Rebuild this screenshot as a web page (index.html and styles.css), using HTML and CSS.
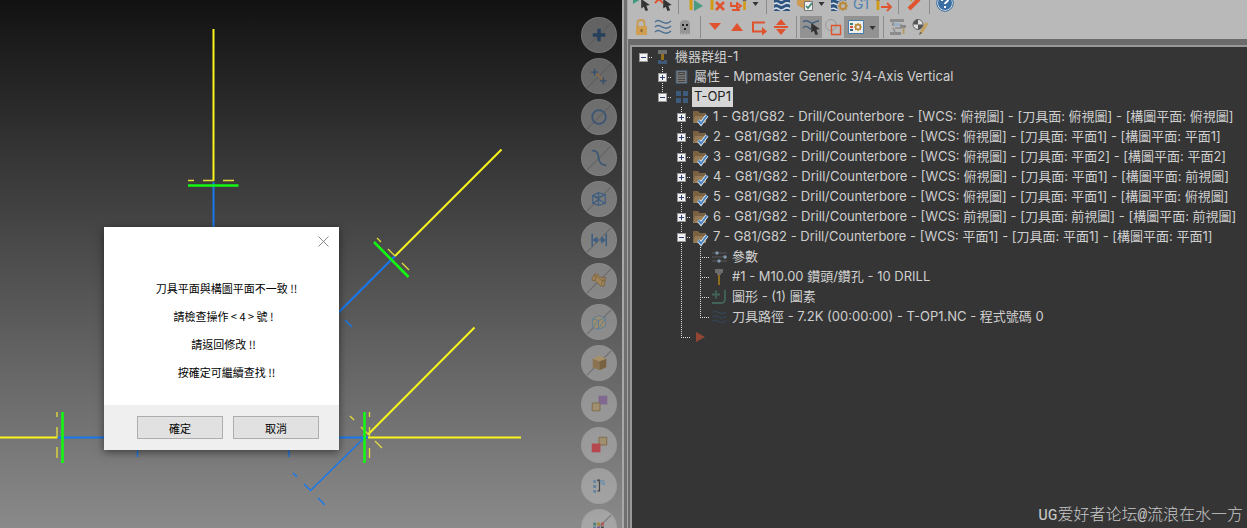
FILE: index.html
```html
<!DOCTYPE html>
<html lang="zh-Hant">
<head>
<meta charset="utf-8">
<title>Toolpath Manager</title>
<link rel="stylesheet" href="styles.css">
</head>
<body>
<svg class="defs" aria-hidden="true">
  <symbol id="cursor" viewBox="0 0 10 14"><path d="M0 0v11l3-2 2 5 3-1-2-5 4-1z" fill="#333"/></symbol>
  <symbol id="waves" viewBox="0 0 18 16"><path d="M1 3c3-3 5-1 7 0s5 3 9-1M1 8c3-3 5-1 7 0s5 3 9-1M1 13c3-3 5-1 7 0s5 3 9-1" fill="none" stroke="currentColor" stroke-width="1.4"/></symbol>
  <symbol id="bit" viewBox="0 0 8 16"><path d="M0 0h8v4H6v2H2V4H0z" fill="#666"/><path d="M2.500 6h3v10h-3z" fill="#d39a16"/></symbol>
  <symbol id="gear" viewBox="0 0 10 10"><circle cx="5" cy="5" r="3" fill="none" stroke="#b98a3c" stroke-width="2"/><path d="M5 0v2M5 8v2M0 5h2M8 5h2M1.500 1.500l1.400 1.400M7.100 7.100l1.400 1.400M8.500 1.500L7.100 2.900M2.900 7.100L1.500 8.500" stroke="#b98a3c" stroke-width="1.500"/></symbol>
  <symbol id="folder" viewBox="0 0 19 20"><path d="M2 4h5l2 2h6v10H2z" fill="#796142"/><path d="M2 16l2-7h11v7z" fill="#947a55"/><path d="M7.500 13.500l2.500 3 6-8" fill="none" stroke="#e4eaf0" stroke-width="3.600"/><path d="M7.500 13.500l2.500 3 6-8" fill="none" stroke="#4a84c0" stroke-width="2"/></symbol>
  <symbol id="slash" viewBox="0 0 35 35"><path d="M5 30L30 5" stroke="#555" stroke-opacity=".55" stroke-width="1.200"/></symbol>
</svg>
<main class="app">
  <section class="viewport" aria-label="Graphics view">
    <svg class="drawing" width="622" height="528" viewBox="0 0 622 528" fill="none">
      <g stroke="#1878ee" stroke-width="2">
        <path d="M213.500 182v50M58 437.500h50M335 316l60-60M335 437.500h33" />
        <path d="M345 320l7 7M364 438l-53 52M293 473l4 4M304 484l7 7M318 498l7 7M137.500 448v9M289 448v9" stroke-width="1.400"/>
      </g>
      <g stroke="#f8f51c" stroke-width="2">
        <path d="M213.500 29v152M0 437.500h57M395 256l106.500-106.500M368 434.500L474.500 327.500M368 437.500h153"/>
        <path d="M188 180.500h6M203 180.500h11M223 180.500h11M57 412v5M57 427v11M57 447v11M369.500 412v5M369.500 427v9M369.500 448v10M377 238l4 4M388 249l7 7M402 263l7 7M350 416l4 4M361 427l7 7M375 441l7 7" stroke="#e4dd38" stroke-width="1.300"/>
      </g>
      <path d="M188 185.500h50.500M62.500 412v51M374 242l34.500 35M364.500 412v51" stroke="#12f812" stroke-width="2.600"/>
    </svg>

    <nav class="quick" aria-label="Quick masks">
      <button class="mask" aria-label="Points"><svg viewBox="0 0 35 35"><use href="#slash"/><path d="M17.500 11v13M11 17.500h13" stroke="#263f5c" stroke-width="3.500"/></svg></button>
      <button class="mask" aria-label="Lines"><svg viewBox="0 0 35 35"><use href="#slash"/><path d="M14 14l8 8" stroke="#8c6b46" stroke-width="1.500"/><path d="M13 10v7M9.500 13.500h7M22 19v7M18.500 22.500h7" stroke="#344f6d" stroke-width="1.500"/></svg></button>
      <button class="mask" aria-label="Arcs"><svg viewBox="0 0 35 35"><use href="#slash"/><circle cx="17.500" cy="17.500" r="7" fill="none" stroke="#3a5673" stroke-width="1.800"/></svg></button>
      <button class="mask" aria-label="Splines"><svg viewBox="0 0 35 35"><use href="#slash"/><path d="M10.500 10c5 0 6 2 6.500 7s3 8 8 8" fill="none" stroke="#3a5673" stroke-width="1.800"/></svg></button>
      <button class="mask" aria-label="Wireframe"><svg viewBox="0 0 35 35"><use href="#slash"/><path d="M11 14l6-3 7 2v9l-7 2-6-2zM11 14l6 2 7-3M17 11v13M11 22l6-4 7 4M11 14l13 8" fill="none" stroke="#3f5f80" stroke-width="1.200"/></svg></button>
      <button class="mask" aria-label="Dimensions"><svg viewBox="0 0 35 35"><use href="#slash"/><path d="M10.500 11v13M25 11v13" stroke="#3f5f80" stroke-width="1.600"/><path d="M13 17.500h10M15.500 14.500l-4 3 4 3zM20 14.500l4 3-4 3z" fill="#3f5f80" stroke="#3f5f80"/></svg></button>
      <button class="mask" aria-label="Surfaces"><svg viewBox="0 0 35 35"><use href="#slash"/><path d="M10.500 14l3-4c5 1 4 5 11 4l-2 9c-7 0-6-7-12-6z" fill="#a1845c" stroke="#7d6542"/><path d="M12 12c6 0 5 6 12 5M13 17l2-5M20 21l2-6" fill="none" stroke="#7d6542"/></svg></button>
      <button class="mask" aria-label="Solid bodies"><svg viewBox="0 0 35 35"><use href="#slash"/><path d="M11 14l6-3 7 2v9l-7 3-6-2z" fill="#9d8e70" stroke="#5b7d99"/><path d="M11 14l6 2 7-3M17 16v9M12 22l4-5M18 23l5-8" fill="none" stroke="#5b7d99"/></svg></button>
      <button class="mask" aria-label="Solid faces"><svg viewBox="0 0 35 35"><use href="#slash"/><path d="M11 13l7-3 7 3-7 3z" fill="#a89068"/><path d="M11 13l7 3v9l-7-3z" fill="#8c7450"/><path d="M18 16l7-3v9l-7 3z" fill="#78623f"/></svg></button>
      <button class="mask" aria-label="Groups"><svg viewBox="0 0 35 35"><path d="M17 9h9v9h-9z" fill="#806891"/><path d="M10.500 16.500h8v8h-8z" fill="#a19070" stroke="#7f6b4b"/></svg></button>
      <button class="mask" aria-label="Results"><svg viewBox="0 0 35 35"><path d="M17.500 9.500h8v8h-8z" fill="#a19070" stroke="#7f6b4b"/><path d="M10 16h9v9h-9z" fill="#b4484e"/></svg></button>
      <button class="mask" aria-label="Levels"><svg viewBox="0 0 35 35"><path d="M11.500 11.500h3v3h-3zM11.500 16.500h3v3h-3zM11.500 21.500h3v3h-3z" fill="#6484a0"/><path d="M15.500 11.500H18v11h-2M16 12h3" fill="none" stroke="#444" stroke-width="1.200"/><path d="M19 12h3l1 4-3-1z" fill="none" stroke="#6f90a8" stroke-width="1.400"/></svg></button>
      <button class="mask" aria-label="Colors"><svg viewBox="0 0 35 35"><use href="#slash"/><path d="M11.500 13h3v3h-3z" fill="#4e7f73"/><path d="M15.500 13h3v3h-3z" fill="#a58a3c"/><path d="M19.500 13h3v3h-3z" fill="#ad554e"/><path d="M11.500 17h3v3h-3z" fill="#557ba0"/><path d="M15.500 17h3v3h-3z" fill="#765e84"/><path d="M19.500 17h3v3h-3z" fill="#444"/></svg></button>
    </nav>

    <div class="dialog" role="dialog" aria-label="訊息">
      <div class="message">
        <button class="close" aria-label="關閉"><svg width="11" height="11" viewBox="0 0 11 11"><path d="M.5.5l10 10M10.500.5l-10 10" stroke="#888"/></svg></button>
        <p class="shift">刀具平面與構圖平面不一致 !!</p>
        <p>請檢查操作 &lt; 4 &gt; 號 !</p>
        <p>請返回修改 !!</p>
        <p class="shift">按確定可繼續查找 !!</p>
      </div>
      <div class="actions"><button>確定</button><button>取消</button></div>
    </div>
  </section>

  <section class="manager">
    <div class="toolbar">
      <div class="tools top">
        <button aria-label="Select all"><svg viewBox="0 0 22 22"><path d="M3 2l8 5-8 5z" fill="#3f9a80"/><use href="#cursor" x="11" y="7" width="9" height="12"/></svg></button>
        <button aria-label="Select dirty"><svg viewBox="0 0 22 22"><path d="M3 3l8 8M11 3l-8 8" stroke="#de5434" stroke-width="2"/><use href="#cursor" x="11" y="7" width="9" height="12"/></svg></button>
        <span class="sep"></span>
        <button aria-label="Regenerate"><svg viewBox="0 0 22 22"><use href="#bit" x="4" y="2" width="8" height="16"/><path d="M11 8l9 6-9 5z" fill="#4b9a82"/></svg></button>
        <button aria-label="Regenerate dirty"><svg viewBox="0 0 22 22"><use href="#bit" x="3" y="2" width="8" height="16"/><path d="M11 10l8 8M19 10l-8 8" stroke="#e0532f" stroke-width="2.500"/></svg></button>
        <button aria-label="Replace tool"><svg viewBox="0 0 22 22"><use href="#bit" x="14" y="3" width="7" height="16"/><path d="M4 10v4h7M5 18h8M10 10v8M10 11l4 3-4 3" fill="none" stroke="#e0532f" stroke-width="1.800"/></svg></button>
        <button class="drop" aria-label="More"><svg viewBox="0 0 12 22"><path d="M3 10h6l-3 4z" fill="#333"/></svg></button>
        <span class="sep"></span>
        <button aria-label="Backplot"><svg viewBox="0 0 22 22"><path d="M3 2h16v17H3z" fill="#2e5580"/><path d="M3 7c4-3 5 2 8 1s4-4 8-1M3 12c4-3 5 2 8 1s4-4 8-1M3 17c4-3 5 2 8 1s4-4 8-1" fill="none" stroke="#d9dfe5" stroke-width="1.600"/></svg></button>
        <button aria-label="Verify"><svg viewBox="0 0 22 22"><path d="M4 5l6-3 7 3v9l-6 3-7-4z" fill="#cf9a52"/><path d="M11.500 9.500h8v9h-8z" fill="#eee" stroke="#777"/><path d="M13 14l2 2 4-5" fill="none" stroke="#398270" stroke-width="1.600"/></svg></button>
        <button class="drop" aria-label="More"><svg viewBox="0 0 12 22"><path d="M3 10h6l-3 4z" fill="#333"/></svg></button>
        <button aria-label="Simulator options"><svg viewBox="0 0 22 22"><path d="M3 2h15v17H3z" fill="#2e5580"/><path d="M3 7c4-3 5 2 8 1s4-4 8-1M3 12c4-3 5 2 8 1s4-4 8-1M3 17c4-3 5 2 8 1" fill="none" stroke="#d9dfe5" stroke-width="1.500"/><circle cx="15" cy="14" r="6" fill="#b9b9b9"/><use href="#gear" x="10" y="9" width="10" height="10"/></svg></button>
        <button class="g1" aria-label="Post">G1</button>
        <button aria-label="High feed"><svg viewBox="0 0 22 22"><use href="#bit" x="2" y="3" width="8" height="15"/><path d="M9 15h9M15 11l4 4-4 4" fill="none" stroke="#df5431" stroke-width="1.800"/></svg></button>
        <span class="sep"></span>
        <button aria-label="Delete"><svg viewBox="0 0 22 22"><path d="M16 7L6 17" stroke="#df5431" stroke-width="4"/><path d="M4 4l5 5" stroke="#c99a3c" stroke-width="2"/></svg></button>
        <span class="sep"></span>
        <button aria-label="Help"><svg viewBox="0 0 22 22"><circle cx="11" cy="11" r="7.500" fill="#396fa5" stroke="#e5e9ed"/><circle cx="11" cy="11" r="8.300" fill="none" stroke="#396fa5"/><path d="M8 9c0-4 6-4 6-1 0 2-3 2-3 4M11 14v2" fill="none" stroke="#fff" stroke-width="2"/></svg></button>
      </div>
      <div class="tools">
        <button aria-label="Lock"><svg viewBox="0 0 22 22"><path d="M7.500 11V7q0-3 3.500-3t3.500 3v4" fill="none" stroke="#c89a4e" stroke-width="1.800"/><rect x="6" y="10" width="11" height="9" rx="1" fill="#cf9e51"/><path d="M11.500 13v3" stroke="#8b6932" stroke-width="2"/></svg></button>
        <button class="blue" aria-label="Toggle toolpath"><svg viewBox="0 0 22 22"><use href="#waves" x="2" y="3" width="18" height="16"/></svg></button>
        <button aria-label="Ghost"><svg viewBox="0 0 22 22"><path d="M6 19V8q0-4 5-4t5 4v11l-2-2-1.500 2-1.500-2-1.500 2-1.500-2z" fill="#969696"/><path d="M8 8h2v2H8zM12 8h2v2h-2zM10 12h2v2h-2z" fill="#222"/></svg></button>
        <span class="sep"></span>
        <button aria-label="Move down"><svg viewBox="0 0 22 22"><path d="M5 7h12l-6 7z" fill="#e0532f"/></svg></button>
        <button aria-label="Move up"><svg viewBox="0 0 22 22"><path d="M5 15h12l-6-8z" fill="#e0532f"/></svg></button>
        <button aria-label="Insert arrow"><svg viewBox="0 0 22 22"><path d="M17 6.500H5v9h10" fill="none" stroke="#e0532f" stroke-width="2"/><path d="M14 11l5 4.500-5 4z" fill="#e0532f"/></svg></button>
        <button aria-label="Scroll to arrow"><svg viewBox="0 0 22 22"><path d="M4 11h14" stroke="#e0532f" stroke-width="2"/><path d="M6 9h10l-5-6zM6 13h10l-5 6z" fill="#e0532f"/></svg></button>
        <span class="sep"></span>
        <button class="on" aria-label="Display selected" aria-pressed="true"><svg viewBox="0 0 22 22"><path d="M3 6c4-4 7 2 10 1s3-2 6-2M3 12c3-4 5 0 8 1" fill="none" stroke="#42617f" stroke-width="1.400"/><use href="#cursor" x="11" y="7" width="9" height="12"/></svg></button>
        <button aria-label="Geometry only"><svg viewBox="0 0 22 22"><circle cx="9" cy="9" r="5.500" fill="none" stroke="#989898"/><path d="M9.500 9.500h9v9h-9z" fill="none" stroke="#e0532f" stroke-width="1.400"/></svg></button>
        <button class="on" aria-label="Display options" aria-pressed="true"><svg viewBox="0 0 22 22"><path d="M4.500 4.500h15v13h-15z" fill="#eee" stroke="#477eac"/><path d="M6 7h3v2H6z" fill="#39816f"/><path d="M6 10h3v2H6z" fill="#d45032"/><path d="M6 13h3v2H6z" fill="#39678f"/><use href="#gear" x="10" y="7" width="8" height="8"/></svg></button>
        <button class="drop on" aria-label="More"><svg viewBox="0 0 12 22"><path d="M3 10h6l-3 4z" fill="#333"/></svg></button>
        <span class="sep"></span>
        <button aria-label="Machine simulation"><svg viewBox="0 0 22 22"><path d="M3 3h14v3H3zM3 16h11v3H3z" fill="#8c8c8c"/><path d="M6 6v3M6 12l2 4M5 9h9v3H8" fill="none" stroke="#8c8c8c" stroke-width="1.500"/><path d="M7 7h6v3H7z" fill="#9ab0c5"/><path d="M14 9h5v3h-5z" fill="#888"/><path d="M16.500 12v6" stroke="#b39b6b" stroke-width="2"/></svg></button>
        <button aria-label="Edit origin"><svg viewBox="0 0 22 22"><circle cx="9" cy="8.500" r="5" fill="#ddd" stroke="#666"/><path d="M9 8.500v-5a5 5 0 0 0-5 5zM9 8.500v5a5 5 0 0 0 5-5z" fill="#555"/><path d="M18 7l-6 10" stroke="#c5a35f" stroke-width="3"/><path d="M11 16l-1 3 3-2z" fill="#555"/></svg></button>
      </div>
    </div>

    <div class="frame">
      <div class="tree" role="tree">
        <div class="row" role="treeitem"><span class="cell h"><button class="box" aria-label="收合"></button></span><span class="icon"><svg viewBox="0 0 19 20"><path d="M5 3h9v4H5z" fill="#707070"/><path d="M8 7h3v6H8z" fill="#94701c"/><path d="M5 13h3v1h3v-1h3v4H5z" fill="#3e5a78"/></svg></span><span class="label">機器群组-1</span></div>
        <div class="row" role="treeitem"><span class="cell"></span><span class="cell v h"><button class="box plus" aria-label="展開"></button></span><span class="icon"><svg viewBox="0 0 19 20"><path d="M4 3.500h11v13H4z" fill="#777" stroke="#3e5870"/><path d="M6.500 5.500h6v2h-6zM6 10h7M6 12.500h7M6 14.500h7" fill="none" stroke="#444"/></svg></span><span class="label">屬性 - Mpmaster Generic 3/4-Axis Vertical</span></div>
        <div class="row" role="treeitem"><span class="cell"></span><span class="cell v half h"><button class="box" aria-label="收合"></button></span><span class="icon"><svg viewBox="0 0 19 20"><path d="M4 4h5v5H4zM11 4h5v5h-5zM4 11h5v5H4zM11 11h5v5h-5z" fill="#3d5c7d"/></svg></span><span class="label selected">T-OP1</span></div>
        <div class="row" role="treeitem"><span class="cell"></span><span class="cell"></span><span class="cell v h"><button class="box plus" aria-label="展開"></button></span><span class="icon"><svg><use href="#folder"/></svg></span><span class="label">1 - G81/G82 - Drill/Counterbore - [WCS: 俯視圖] - [刀具面: 俯視圖] - [構圖平面: 俯視圖]</span></div>
        <div class="row" role="treeitem"><span class="cell"></span><span class="cell"></span><span class="cell v h"><button class="box plus" aria-label="展開"></button></span><span class="icon"><svg><use href="#folder"/></svg></span><span class="label">2 - G81/G82 - Drill/Counterbore - [WCS: 俯視圖] - [刀具面: 平面1] - [構圖平面: 平面1]</span></div>
        <div class="row" role="treeitem"><span class="cell"></span><span class="cell"></span><span class="cell v h"><button class="box plus" aria-label="展開"></button></span><span class="icon"><svg><use href="#folder"/></svg></span><span class="label">3 - G81/G82 - Drill/Counterbore - [WCS: 俯視圖] - [刀具面: 平面2] - [構圖平面: 平面2]</span></div>
        <div class="row" role="treeitem"><span class="cell"></span><span class="cell"></span><span class="cell v h"><button class="box plus" aria-label="展開"></button></span><span class="icon"><svg><use href="#folder"/></svg></span><span class="label">4 - G81/G82 - Drill/Counterbore - [WCS: 俯視圖] - [刀具面: 平面1] - [構圖平面: 前視圖]</span></div>
        <div class="row" role="treeitem"><span class="cell"></span><span class="cell"></span><span class="cell v h"><button class="box plus" aria-label="展開"></button></span><span class="icon"><svg><use href="#folder"/></svg></span><span class="label">5 - G81/G82 - Drill/Counterbore - [WCS: 俯視圖] - [刀具面: 平面1] - [構圖平面: 俯視圖]</span></div>
        <div class="row" role="treeitem"><span class="cell"></span><span class="cell"></span><span class="cell v h"><button class="box plus" aria-label="展開"></button></span><span class="icon"><svg><use href="#folder"/></svg></span><span class="label">6 - G81/G82 - Drill/Counterbore - [WCS: 前視圖] - [刀具面: 前視圖] - [構圖平面: 前視圖]</span></div>
        <div class="row" role="treeitem"><span class="cell"></span><span class="cell"></span><span class="cell v h"><button class="box" aria-label="收合"></button></span><span class="icon"><svg><use href="#folder"/></svg></span><span class="label">7 - G81/G82 - Drill/Counterbore - [WCS: 平面1] - [刀具面: 平面1] - [構圖平面: 平面1]</span></div>
        <div class="row" role="treeitem"><span class="cell"></span><span class="cell"></span><span class="cell v"></span><span class="cell v h"></span><span class="icon"><svg viewBox="0 0 19 20"><path d="M2 6h15M2 10h15M2 14h15" stroke="#55595c"/><circle cx="7" cy="6" r="1.700" fill="#8097ad"/><circle cx="15" cy="10" r="1.700" fill="#8097ad"/><circle cx="9" cy="14" r="1.700" fill="#8097ad"/></svg></span><span class="label">參數</span></div>
        <div class="row" role="treeitem"><span class="cell"></span><span class="cell"></span><span class="cell v"></span><span class="cell v h"></span><span class="icon"><svg viewBox="0 0 19 20"><path d="M5 2h8v4h-2v2H7V6H5z" fill="#6c6c6c"/><path d="M8 8h2v10H8z" fill="#8d6d1c"/></svg></span><span class="label">#1 - M10.00 鑽頭/鑽孔 - 10 DRILL</span></div>
        <div class="row" role="treeitem"><span class="cell"></span><span class="cell"></span><span class="cell v"></span><span class="cell v h"></span><span class="icon"><svg viewBox="0 0 19 20"><path d="M2 7.500h8M6 3.500v8M15 3v9q0 4-4 4H2" fill="none" stroke="#416457" stroke-width="1.800"/></svg></span><span class="label">圖形 - (1) 圖素</span></div>
        <div class="row" role="treeitem"><span class="cell"></span><span class="cell"></span><span class="cell v"></span><span class="cell v half h"></span><span class="icon dim"><svg viewBox="0 0 19 20"><use href="#waves" x="1" y="3" width="17" height="14"/></svg></span><span class="label">刀具路徑 - 7.2K (00:00:00) - T-OP1.NC - 程式號碼 0</span></div>
        <div class="row" role="treeitem" aria-label="插入箭頭"><span class="cell"></span><span class="cell"></span><span class="cell v half h"></span><span class="icon"><svg viewBox="0 0 19 20"><path d="M5 5l9 5-9 5z" fill="#934633"/></svg></span></div>
      </div>
    </div>
    <p class="watermark" lang="zh-Hans">UG爱好者论坛@流浪在水一方</p>
  </section>
</main>
</body>
</html>
```

FILE: styles.css
```css
* { box-sizing: border-box; }
body { margin: 0; font-family: Inter, "Noto Sans CJK TC", sans-serif; font-size: 13px; }
button { margin: 0; padding: 0; border: 0; background: none; font: inherit; color: inherit; }
.defs { position: absolute; width: 0; height: 0; }

.app { display: grid; grid-template-columns: 622fr 625fr; height: 100vh; overflow: hidden; }

/* Graphics view */
.viewport { position: relative; min-width: 0; overflow: hidden; background: linear-gradient(#121212, #8a8a8a); }
.drawing { position: absolute; left: 0; top: 0; }

.quick { position: absolute; top: 17px; right: 5px; display: flex; flex-direction: column; gap: 5px; }
.mask { width: 36px; height: 36px; border-radius: 50%; background: rgba(205, 205, 205, .42); border: 1px solid rgba(150, 150, 150, .3); }
.mask svg { display: block; width: 34px; height: 34px; }

.dialog {
  position: absolute; left: 104px; top: 227px; width: 235px;
  background: #fff; box-shadow: 0 2px 8px rgba(0, 0, 0, .5);
  color: #000; font-family: "Noto Sans CJK TC", sans-serif; font-size: 11px; line-height: 28px;
}
.message { position: relative; padding: 47px 0 19px 4px; text-align: center; }
.message p { margin: 0; }
.message .shift { padding-left: 6px; }
.close { position: absolute; top: 8px; right: 9px; width: 12px; height: 12px; }
.close svg { display: block; }
.actions { display: flex; justify-content: flex-end; gap: 10px; padding: 11px 20px; background: #efefef; }
.actions button { width: 86px; height: 23px; border: 1px solid #adadad; background: #e1e1e1; line-height: 18px; }

/* Manager panel */
.manager {
  position: relative; display: flex; flex-direction: column; min-width: 0; padding-left: 6px;
  background: linear-gradient(90deg, #a8a8a8 2px, #707070 2px 5px, #a4a4a4 5px 6px, #6b6b6b 6px);
}
.toolbar { height: 39px; overflow: hidden; padding-left: 2px; background: #b9b9b9; }
.tools { display: flex; height: 22px; margin-top: 2px; }
.tools.top { margin-top: -8px; }
.tools button { width: 22px; height: 22px; }
.tools svg { display: block; width: 100%; height: 100%; }
.tools .drop { width: 13px; }
.tools .on { background: #929292; }
.tools .g1 { color: #4d80b2; font-size: 14px; }
.sep { width: 8px; background: linear-gradient(#8c8c8c, #8c8c8c) 4px 0 / 1px 100% no-repeat; }
.top .sep { width: 9px; }
.blue { color: #4b6f91; }
.dim { color: #344556; }

.frame { flex: 1; display: flex; min-height: 0; padding: 6px 0 0 2px; }
.tree { flex: 1; min-width: 0; overflow: hidden; padding-left: 2px; border: 2px solid #999; border-width: 2px 0 0 2px; background: #353535; color: #cfcfcf; }
.row { display: flex; height: 20px; line-height: 18px; white-space: nowrap; }
.cell { --vh: 0; --hw: 0; flex: none; width: 19px; padding: 6px 5px;
  background:
    repeating-linear-gradient(#ddd 0 1px, transparent 1px 2px) 9px 0 / 1px var(--vh) no-repeat,
    repeating-linear-gradient(90deg, #ddd 0 1px, transparent 1px 2px) 9px 10px / var(--hw) 1px no-repeat;
}
.v { --vh: 20px; }
.half { --vh: 10px; }
.h { --hw: 10px; }
.box { display: block; width: 9px; height: 9px; border: 1px solid #999;
  background: linear-gradient(#2b3f78, #2b3f78) 1px 3px / 5px 1px no-repeat, #f2f2f2; }
.box.plus { background: linear-gradient(#2b3f78, #2b3f78) 1px 3px / 5px 1px no-repeat, linear-gradient(#2b3f78, #2b3f78) 3px 1px / 1px 5px no-repeat, #f2f2f2; }
.icon { flex: none; width: 19px; height: 20px; }
.icon svg { display: block; width: 19px; height: 20px; }
.label { margin-left: 1px; padding: 0 2px; }
.selected { background: #d6d6d6; color: #222; }

.watermark { position: absolute; right: 4px; bottom: 1px; margin: 0; color: #c8c8c8; font: 300 16px/22px "Liberation Mono", "Noto Sans CJK SC", monospace; white-space: nowrap; }
```
